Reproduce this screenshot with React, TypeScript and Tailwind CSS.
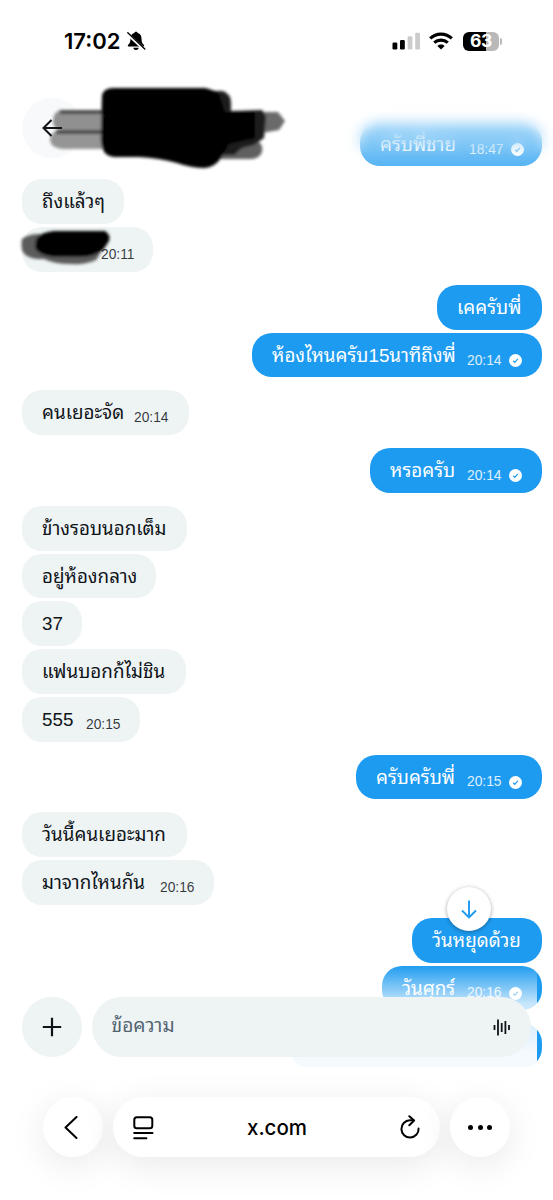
import React from 'react';

type Message = {
    text: string;
    width: string;
    textWidth: string;
    time?: string;
};

type Group = { mine: boolean; messages: Message[] };

const GROUPS: Group[] = [
    { mine: true, messages: [{ text: 'ครับพี่ชาย', width: 'w-[182px]', textWidth: 'w-[78px]', time: '18:47' }] },
    {
        mine: false,
        messages: [
            { text: 'ถึงแล้วๆ', width: 'w-[102px]', textWidth: 'w-[62px]' },
            { text: '', width: 'w-[131px]', textWidth: 'w-[48px]', time: '20:11' },
        ],
    },
    {
        mine: true,
        messages: [
            { text: 'เคครับพี่', width: 'w-[105px]', textWidth: 'w-[64px]' },
            { text: 'ห้องไหนครับ15นาทีถึงพี่', width: 'w-[290px]', textWidth: 'w-[184px]', time: '20:14' },
        ],
    },
    { mine: false, messages: [{ text: 'คนเยอะจัด', width: 'w-[167px]', textWidth: 'w-[81px]', time: '20:14' }] },
    { mine: true, messages: [{ text: 'หรอครับ', width: 'w-[172px]', textWidth: 'w-[66px]', time: '20:14' }] },
    {
        mine: false,
        messages: [
            { text: 'ข้างรอบนอกเต็ม', width: 'w-[165px]', textWidth: 'w-[125px]' },
            { text: 'อยู่ห้องกลาง', width: 'w-[134px]', textWidth: 'w-[94px]' },
            { text: '37', width: 'w-[60px]', textWidth: 'w-[21px]' },
            { text: 'แฟนบอกก้ไม่ชิน', width: 'w-[164px]', textWidth: 'w-[124px]' },
            { text: '555', width: 'w-[118px]', textWidth: 'w-[33px]', time: '20:15' },
        ],
    },
    { mine: true, messages: [{ text: 'ครับครับพี่', width: 'w-[186px]', textWidth: 'w-[80px]', time: '20:15' }] },
    {
        mine: false,
        messages: [
            { text: 'วันนี้คนเยอะมาก', width: 'w-[165px]', textWidth: 'w-[125px]' },
            { text: 'มาจากไหนกัน', width: 'w-[192px]', textWidth: 'w-[107px]', time: '20:16' },
        ],
    },
    {
        mine: true,
        messages: [
            { text: 'วันหยุดด้วย', width: 'w-[130px]', textWidth: 'w-[90px]' },
            { text: 'วันศุกร์', width: 'w-[160px]', textWidth: 'w-[54px]', time: '20:16' },
        ],
    },
    { mine: true, messages: [{ text: '', width: 'w-[252px]', textWidth: 'w-[148px]' }] },
];

const SeenIcon: React.FC = () => (
    <svg className="ml-[7px] h-[13px] w-[13px] shrink-0" viewBox="0 0 13 13">
        <circle cx="6.5" cy="6.5" r="6.5" fill="#fff" />
        <path d="M4.2 6.8l1.6 1.5 3-3.5" fill="none" stroke="#1d9bf0" strokeWidth="1.2" />
    </svg>
);

const Bubble: React.FC<{ message: Message; mine: boolean }> = ({ message, mine }) => (
    <div
        className={`flex h-[44.8px] shrink-0 rounded-[20px] pl-[20px] ${message.width} ${
            mine ? 'bg-[#1d9bf0] text-white' : 'bg-[#eef3f4] text-[#0f1419]'
        }`}
    >
        <span className={`shrink-0 whitespace-nowrap text-[18.8px] leading-[45px] ${message.textWidth}`}>{message.text}</span>
        {message.time && (
            <span className="ml-[11px] flex h-[44.8px] items-center pt-[11px] text-[13.8px] leading-[20px]">
                <span className={mine ? 'text-white/85' : 'text-[#0f1419]/85'}>{message.time}</span>
                {mine && <SeenIcon />}
            </span>
        )}
    </div>
);

const StatusBar: React.FC = () => (
    <div className="flex h-[78px] items-center bg-white pl-[64px] pt-[4px]">
        <span className="w-[62px] font-['Inter'] text-[22px] font-semibold leading-[24px] text-black">17:02</span>
        <svg className="h-[20px] w-[20px]" viewBox="0 0 20 20">
            <path d="M10 .8c-1 0-1.6.6-1.7 1.3C5.7 2.8 4.5 5 4.5 7.5c0 3.6-.8 4.7-2.3 6.3-.8.9-.4 1.8.6 1.8h14.4c1 0 1.4-.9.6-1.8-1.5-1.6-2.3-2.7-2.3-6.3 0-2.500-1.200-4.700-3.800-5.400C11.600 1.400 11 .8 10 .8zM7.300 16.700c.2 1.300 1.300 2.300 2.700 2.300s2.500-1 2.700-2.300z" fill="#000" />
            <path d="M1.2 2.6l17 15.7" stroke="#fff" strokeWidth="3" />
            <path d="M1.8 1.7l17 16.2" stroke="#000" strokeWidth="1.4" strokeLinecap="round" />
        </svg>
        <svg className="ml-[246px] h-[18px] w-[29px]" viewBox="0 0 29 18">
            <rect x="0.5" y="10.5" width="4.8" height="7" rx="1.3" />
            <rect x="8" y="8" width="4.8" height="9.5" rx="1.3" />
            <rect x="15.6" y="4.3" width="4.8" height="13.2" rx="1.3" fill="#cbcbcb" />
            <rect x="23.2" y="0.8" width="4.8" height="16.7" rx="1.3" fill="#cbcbcb" />
        </svg>
        <svg className="ml-[8px] h-[18px] w-[24px]" viewBox="0 0 24 18" fill="none" stroke="#000" strokeWidth="3.1">
            <path d="M1.2 6.4C7.3.7 16.7.7 22.8 6.4" />
            <path d="M5.2 10.7c3.9-3.5 9.7-3.5 13.6 0" />
            <path d="M12 17.5l-3.6-3.6c2-1.8 5.2-1.8 7.2 0z" fill="#000" stroke="none" />
        </svg>
        <div className="ml-[10px] flex items-center">
            <div className="flex h-[19px] w-[36px] items-center justify-center rounded-[6px] bg-linear-to-r from-black from-64% to-[#b9b9b9] to-64% font-['Inter'] text-[17.5px] font-bold leading-none tracking-[-0.3px] text-white">
                63
            </div>
            <div className="ml-[1px] h-[7px] w-[2px] rounded-r-full bg-[#b9b9b9]" />
        </div>
    </div>
);

const Scribble: React.FC = () => (
    <svg className="absolute left-0 top-0 h-[200px] w-[553px]" viewBox="0 0 553 200">
        <defs>
            <filter id="soft" filterUnits="userSpaceOnUse" x="0" y="0" width="553" height="300">
                <feGaussianBlur stdDeviation="1.8" />
            </filter>
        </defs>
        <g filter="url(#soft)">
            <path d="M60 110h52v20H62q-10-1-9-10 1-8 7-10z" fill="#909090" />
            <path d="M58 130h54v19H62q-11-1-12-9 0-7 8-10z" fill="#959595" />
            <path d="M60 112h50M56 132h52" stroke="#484848" strokeWidth="4" />
            <path d="M218 140h38q8 4 6 12-3 7-11 7h-33z" fill="#606060" />
            <path d="M262 112h16l7 9-6 9-17 3z" fill="#6a6a6a" />
            <path d="M215 91h8q8 3 8 12v8l31-1 4 6-2 22-10 7-12 3-8 7h-19z" fill="#1a1a1a" />
            <path
                d="M102 95q2-7 11-7h92q10 2 14 6l6 18 30 0v26l-26 6-8 14q-6 9-16 10-14 0-28-5-18-5-38-6h-25q-8-1-11-7-3-8-2-16z"
                fill="#000"
            />
        </g>
    </svg>
);

const NameScribble: React.FC = () => (
    <svg className="absolute left-[14px] top-[222px] h-[50px] w-[104px]" viewBox="0 0 104 50">
        <g filter="url(#soft)">
            <path d="M8 17q6-5 18-5l12 4 50 6q-1 10-6 16-10 5-26 4-16 0-26-5-18 1-22-9-1-7 0-11z" fill="#5c5c5c" />
            <path d="M22 17q5-7 18-8h51q6 4 4 10l-6 9q-8 6-20 7H40q-16-2-19-9z" fill="#050505" />
        </g>
    </svg>
);

const Composer: React.FC = () => (
    <div className="absolute left-0 top-[965px] flex h-[102px] w-[537px] items-start gap-[10px] bg-linear-to-b from-white/0 via-white/75 via-38% to-white/95 to-85% pl-[21.5px] pt-[31.5px]">
        <button className="flex h-[60px] w-[60px] shrink-0 items-center justify-center rounded-full bg-[#eef3f4]">
            <svg className="h-[20px] w-[20px]" viewBox="0 0 20 20" stroke="#0f1419" strokeWidth="2.2">
                <path d="M10 .8v18.400M.8 10h18.400" />
            </svg>
        </button>
        <div className="flex h-[60px] w-[439px] justify-between rounded-full bg-[#eef3f4] pl-[20px] pr-[20px]">
            <span className="text-[19.2px] leading-[58px] text-[#536471]">ข้อความ</span>
            <svg className="mt-[22px] h-[17px] w-[18px]" viewBox="0 0 18 17" stroke="#0f1419" strokeWidth="1.8">
                <path d="M1.500 6v5M5 .5v16M8.700 4v9M12.400 2v13M16 6v5" />
            </svg>
        </div>
    </div>
);

const BrowserBar: React.FC = () => (
    <div className="flex h-[133px] items-start gap-[10px] bg-white pl-[43px] pt-[30px]">
        <button className="flex h-[60px] w-[60px] items-center justify-center rounded-full bg-white shadow-[0_8px_36px_rgba(0,0,0,0.09)]">
            <svg className="mr-[4px] h-[23px] w-[14px]" viewBox="0 0 14 23" fill="none" stroke="#000" strokeWidth="2" strokeLinecap="round" strokeLinejoin="round">
                <path d="M12.500 1L1.500 11.500l11 10.500" />
            </svg>
        </button>
        <div className="flex h-[60px] w-[327px] items-center justify-between rounded-full bg-white pl-[20px] pr-[20px] shadow-[0_8px_36px_rgba(0,0,0,0.09)]">
            <svg className="mt-[1px] h-[24px] w-[21px]" viewBox="0 0 21 24" fill="none" stroke="#000" strokeWidth="2" strokeLinecap="round">
                <rect x="1.3" y="1.3" width="18" height="11" rx="2.5" />
                <path d="M1.200 17h18.300M1.200 22.300h12.200" />
            </svg>
            <span className="pt-[2px] font-['Inter'] text-[20.5px] font-medium text-black">x.com</span>
            <svg className="h-[24px] w-[20px]" viewBox="0 0 20 24" fill="none" stroke="#000" strokeWidth="2" strokeLinecap="round" strokeLinejoin="round">
                <path d="M13.500 5.300H9.800A8.600 8.600 0 1 0 18.600 13.600" />
                <path d="M9.300 1.200l4.800 4.300-4.800 4.700" />
            </svg>
        </div>
        <button className="flex h-[60px] w-[60px] items-center justify-center gap-[4.7px] rounded-full bg-white shadow-[0_8px_36px_rgba(0,0,0,0.09)]">
            <span className="h-[5px] w-[5px] rounded-full bg-black" />
            <span className="h-[5px] w-[5px] rounded-full bg-black" />
            <span className="h-[5px] w-[5px] rounded-full bg-black" />
        </button>
    </div>
);

const App: React.FC = () => {
    return (
        <div className="relative flex h-[1200px] w-[553px] flex-col overflow-hidden bg-white font-['Liberation_Sans','Noto_Sans_Thai_Looped','Loma','Garuda','Noto_Sans_Thai',sans-serif]">
            <StatusBar />

            <main className="flex h-[989px] shrink-0 flex-col gap-[12.9px] overflow-hidden pl-[22px] pr-[11px] pt-[43.7px]">
                {GROUPS.map((group, i) => (
                    <section key={i} className={`flex flex-col gap-[3px] ${group.mine ? 'items-end' : 'items-start'}`}>
                        {group.messages.map((message, j) => (
                            <Bubble key={j} message={message} mine={group.mine} />
                        ))}
                    </section>
                ))}
            </main>

            <BrowserBar />

            {/* Header fade over the scrolled messages */}
            <div className="absolute left-0 top-[78px] h-[80px] w-full mask-linear-[180deg] mask-linear-from-60% backdrop-blur-[7px]" />
            <div className="absolute left-0 top-[78px] h-[89px] w-full bg-linear-to-b from-white from-10% via-white/60 via-50% to-white/25" />
            <div className="absolute left-[21.5px] top-[98px] h-[60px] w-[60px] rounded-full bg-[#f7f9fa]" />
            <Scribble />
            <svg className="absolute left-[42px] top-[119px] h-[18px] w-[20px]" viewBox="0 0 20 18" fill="none" stroke="#0f1419" strokeWidth="2">
                <path d="M20 9H1.500M9.500 1L1.500 9l8 8" />
            </svg>
            <NameScribble />

            <Composer />

            <button className="absolute left-[447px] top-[887px] flex h-[44px] w-[44px] items-center justify-center rounded-full bg-white shadow-[0_1px_4px_rgba(0,0,0,0.35)]">
                <svg className="h-[19px] w-[16px]" viewBox="0 0 16 19" fill="none" stroke="#1d9bf0" strokeWidth="1.9">
                    <path d="M8 .5v16.500M1 10.500l7 7 7-7" />
                </svg>
            </button>
        </div>
    );
};

export default App;
